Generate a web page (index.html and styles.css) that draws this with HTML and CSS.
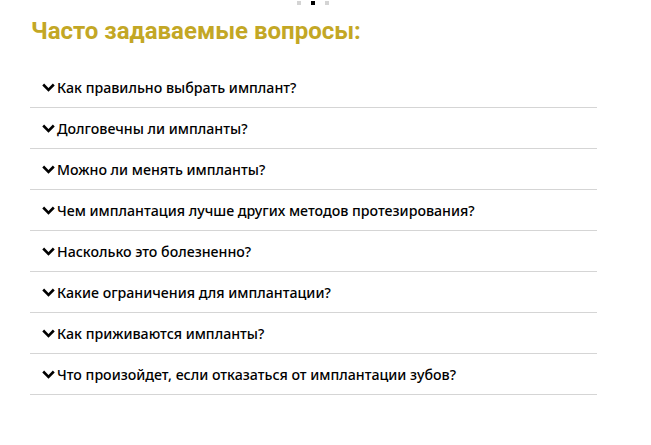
FILE: index.html
```html
<!DOCTYPE html>
<html lang="ru">
<head>
    <meta charset="UTF-8">
    <meta name="viewport" content="width=device-width, initial-scale=1.0">
    <title>Часто задаваемые вопросы</title>
    <link rel="stylesheet" href="styles.css">
</head>
<body>
    <div class="dots">
        <span class="dot"></span>
        <span class="dot active"></span>
        <span class="dot"></span>
    </div>

    <section class="faq">
        <h2>Часто задаваемые вопросы:</h2>

        <div class="faq-list">
            <div class="faq-item">
                <svg class="chevron" viewBox="0 0 13 9"><path d="M1.2 1.5 L6.5 6.8 L11.8 1.5"/></svg>
                <span>Как правильно выбрать имплант?</span>
            </div>
            <div class="faq-item">
                <svg class="chevron" viewBox="0 0 13 9"><path d="M1.2 1.5 L6.5 6.8 L11.8 1.5"/></svg>
                <span>Долговечны ли импланты?</span>
            </div>
            <div class="faq-item">
                <svg class="chevron" viewBox="0 0 13 9"><path d="M1.2 1.5 L6.5 6.8 L11.8 1.5"/></svg>
                <span>Можно ли менять импланты?</span>
            </div>
            <div class="faq-item">
                <svg class="chevron" viewBox="0 0 13 9"><path d="M1.2 1.5 L6.5 6.8 L11.8 1.5"/></svg>
                <span>Чем имплантация лучше других методов протезирования?</span>
            </div>
            <div class="faq-item">
                <svg class="chevron" viewBox="0 0 13 9"><path d="M1.2 1.5 L6.5 6.8 L11.8 1.5"/></svg>
                <span>Насколько это болезненно?</span>
            </div>
            <div class="faq-item">
                <svg class="chevron" viewBox="0 0 13 9"><path d="M1.2 1.5 L6.5 6.8 L11.8 1.5"/></svg>
                <span>Какие ограничения для имплантации?</span>
            </div>
            <div class="faq-item">
                <svg class="chevron" viewBox="0 0 13 9"><path d="M1.2 1.5 L6.5 6.8 L11.8 1.5"/></svg>
                <span>Как приживаются импланты?</span>
            </div>
            <div class="faq-item">
                <svg class="chevron" viewBox="0 0 13 9"><path d="M1.2 1.5 L6.5 6.8 L11.8 1.5"/></svg>
                <span>Что произойдет, если отказаться от имплантации зубов?</span>
            </div>
        </div>
    </section>
</body>
</html>
```

FILE: styles.css
```css
body { margin: 0; background: #fff; font-family: "Noto Sans", Arial, sans-serif; color: #000; }
.dots { display: flex; gap: 10px; padding: 1px 0 0 297px; height: 4px; }
.dot { width: 4px; height: 4px; background: #d4d4d4; }
.dot.active { background: #000; }
.faq { width: 567px; margin-left: 30px; }
.faq h2 { font-family: Roboto, Arial, sans-serif; font-weight: 700; font-size: 24px; color: #c3a725; margin: 12px 0 0 1px; line-height: 28px; }
.faq-list { margin-top: 22px; }
.faq-item { display: flex; align-items: center; gap: 2px; height: 40px; border-bottom: 1px solid #d5d5d5; padding-left: 12px; font-size: 14.2px; font-weight: 500; }
.chevron { width: 13px; height: 9px; fill: none; stroke: #000; stroke-width: 2.6; }
```
